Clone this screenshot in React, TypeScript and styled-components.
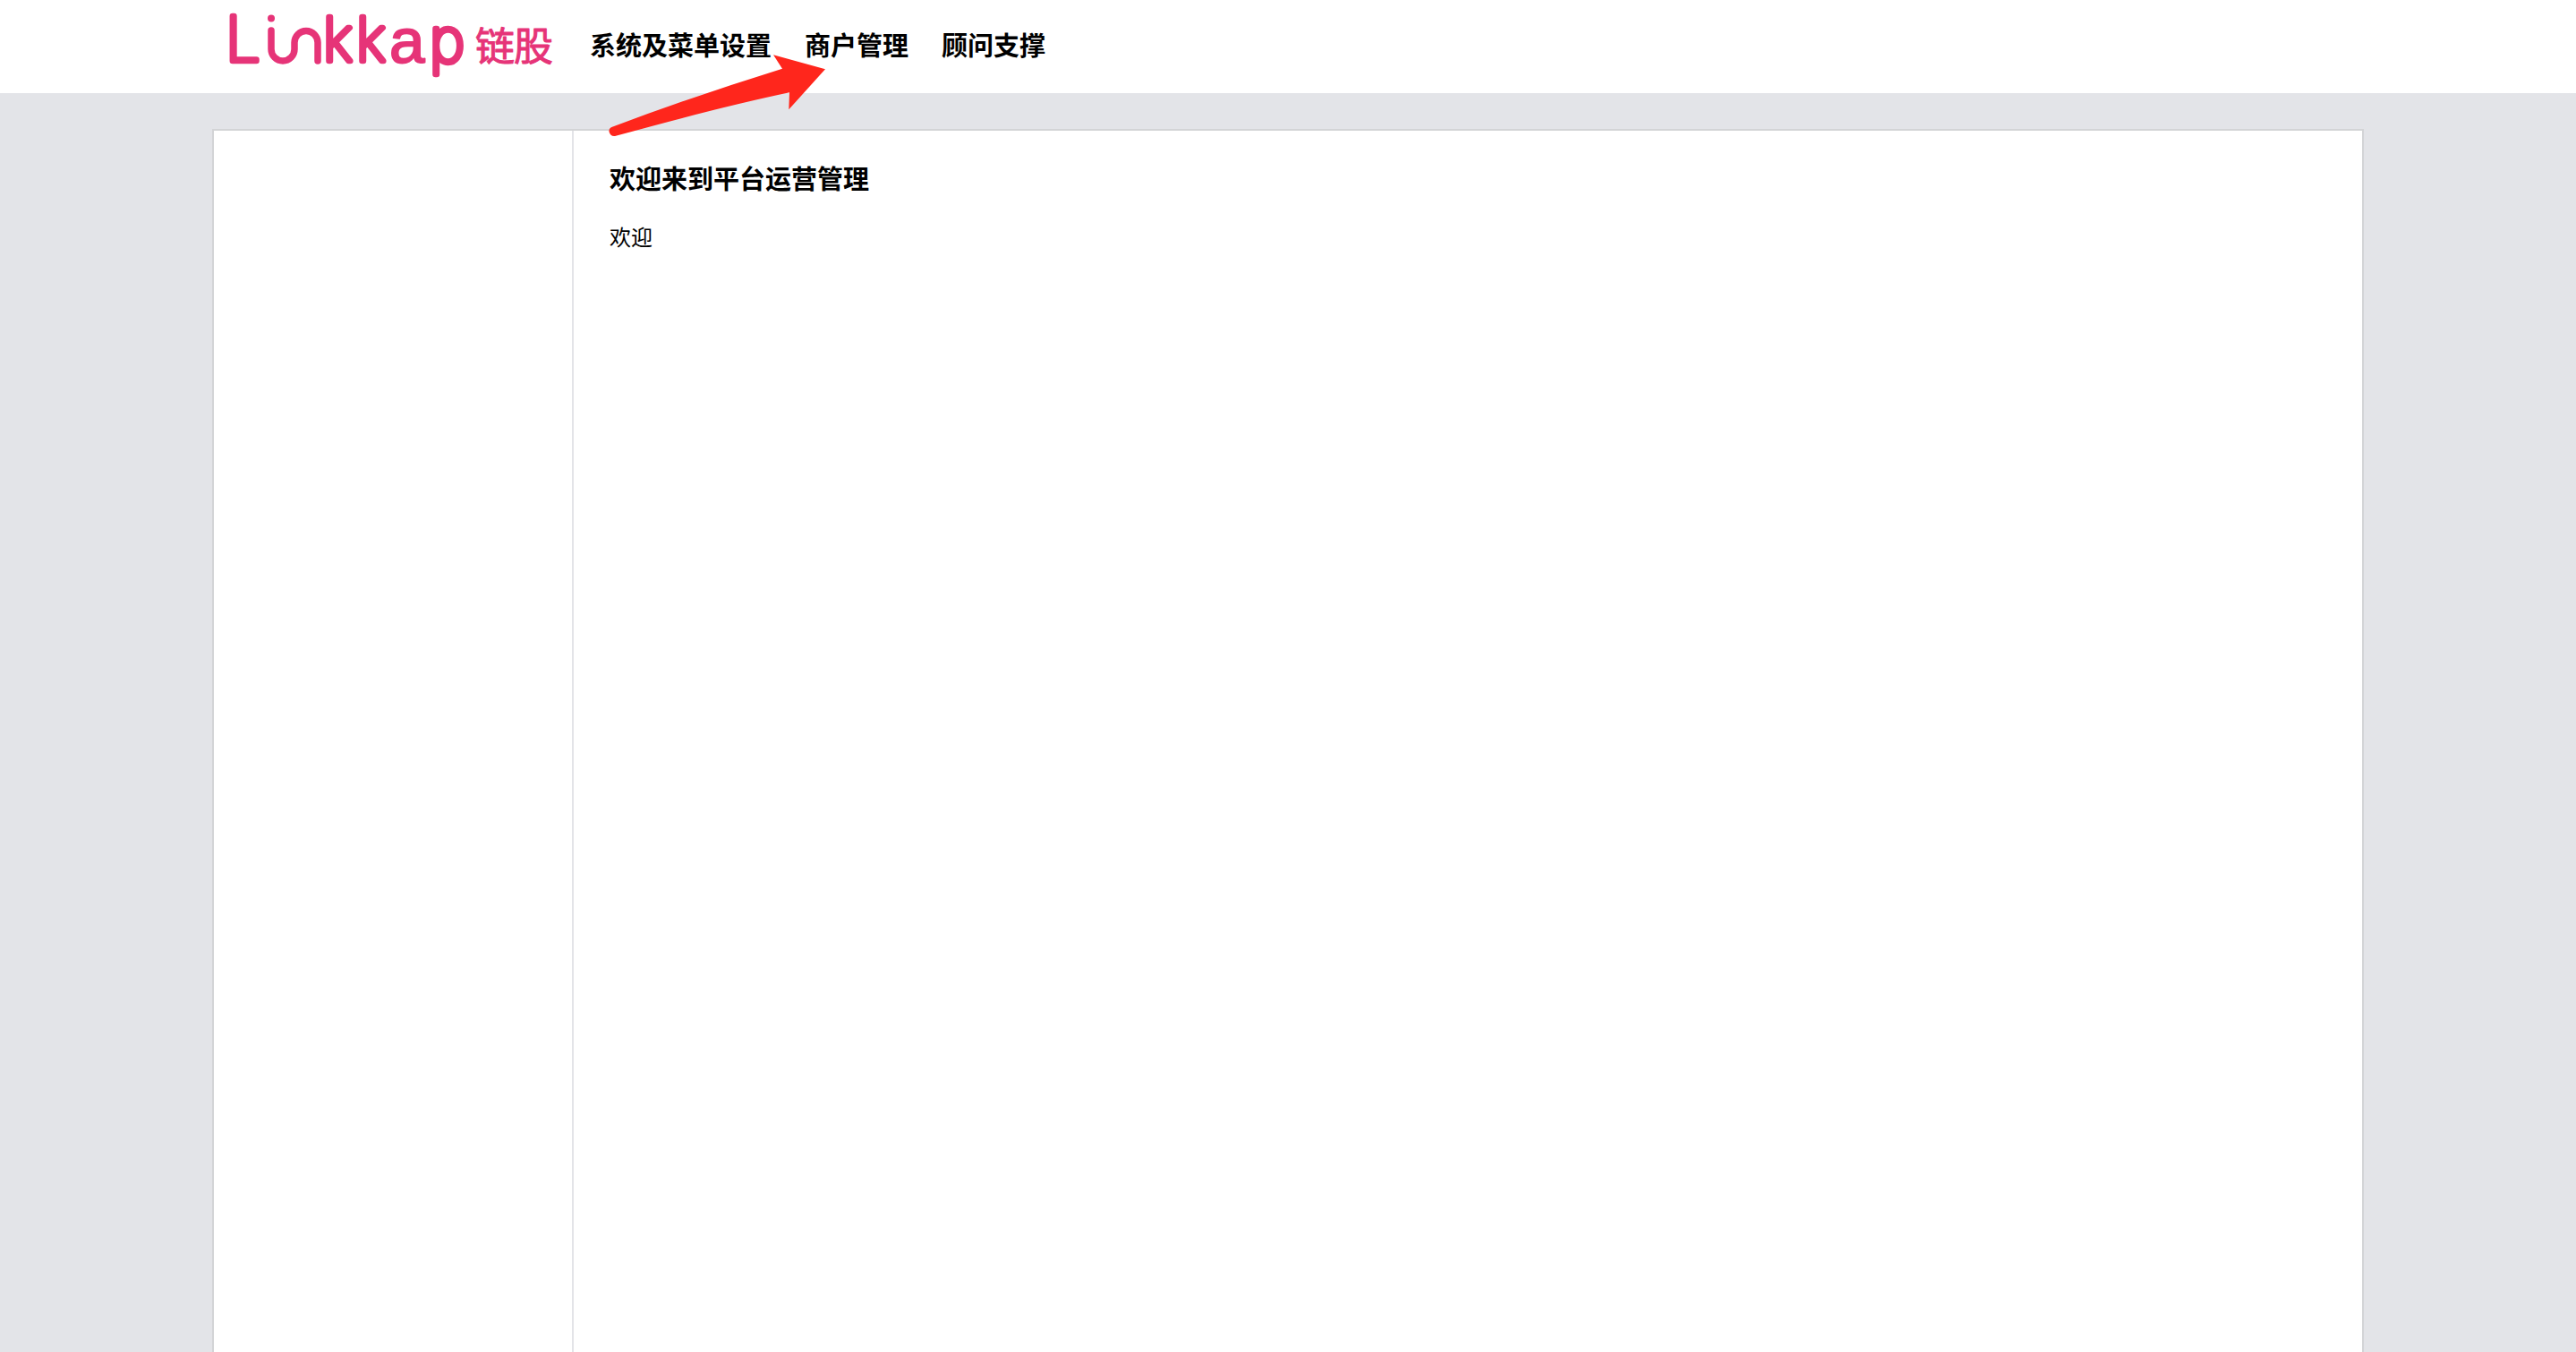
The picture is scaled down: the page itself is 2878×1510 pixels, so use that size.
import React from "react";
import styled, { createGlobalStyle } from "styled-components";

const GlobalStyle = createGlobalStyle`
  *, *::before, *::after { box-sizing: border-box; }
  body {
    margin: 0;
    background: #e3e4e8;
    color: #000;
    font-family: "Noto Sans CJK SC", sans-serif;
    font-size: 24px;
    line-height: 36px;
  }
`;

const Page = styled.div`
  display: flex;
  flex-direction: column;
  gap: 40px;
  min-height: 100vh;
`;

const Header = styled.header`
  background: #fff;
`;

const HeaderInner = styled.div`
  position: relative;
  display: flex;
  align-items: center;
  gap: 20px;
  width: 100%;
  max-width: 2404px;
  height: 104px;
  margin: 0 auto;
`;

const LogoLink = styled.a`
  display: flex;
  flex: none;
`;

const LogoSvg = styled.svg`
  display: block;
  width: 402px;
  height: 104px;
  fill: #e63478;
  stroke: #e63478;
  stroke-linecap: round;
  stroke-linejoin: round;
`;

const Nav = styled.nav`
  display: flex;
  gap: 37px;
  padding-bottom: 6px;
`;

const NavLink = styled.a`
  color: inherit;
  font-size: 29px;
  font-weight: 700;
  line-height: 40px;
  text-decoration: none;
  white-space: nowrap;
`;

const Pointer = styled.svg`
  position: absolute;
  top: 60px;
  left: 440px;
  width: 250px;
  height: 96px;
  fill: #ff261c;
  pointer-events: none;
`;

const Panel = styled.div`
  display: flex;
  flex: 1;
  width: 100%;
  max-width: 2404px;
  margin: 0 auto;
  border: 2px solid #d3d4d6;
  border-bottom: 0;
  background: #fff;
`;

const Sidebar = styled.aside`
  flex: none;
  width: 402px;
  border-right: 2px solid #e3e4e8;
`;

const Content = styled.main`
  flex: 1;
  padding: 32px 40px;
`;

const Title = styled.h1`
  margin: 0 0 28px;
  font-size: 29px;
  font-weight: 700;
  line-height: 40px;
`;

const Text = styled.p`
  margin: 0;
`;

const navItems = ["系统及菜单设置", "商户管理", "顾问支撑"];

function Logo() {
  return (
    <LogoSvg viewBox="237 0 402 104" role="img" aria-label="Linkkap 链股">
      <g fontFamily="Inter, sans-serif" fontWeight="100" fontSize="67" strokeWidth="6.500">
        <text x="252" y="68" fontSize="69">L</text>
        <text x="361 398" y="68">kk</text>
        <text x="480" y="69">p</text>
      </g>
      <text x="435" y="70" fontFamily="Liberation Sans, sans-serif" fontSize="71" strokeWidth="2">
        a
      </text>
      <circle cx="303" cy="20.5" r="4" stroke="none" />
      <path
        d="M303 34V55A13 13 0 0 0 329 55V47.500A13 13 0 0 1 355 47.500V68"
        fill="none"
        strokeWidth="7.500"
      />
      <text x="531 574" y="68" fontFamily="Noto Sans CJK SC, sans-serif" fontSize="44" strokeWidth="1">
        链股
      </text>
    </LogoSvg>
  );
}

export default function App() {
  return (
    <>
      <GlobalStyle />
      <Page>
        <Header>
          <HeaderInner>
            <LogoLink href="#">
              <Logo />
            </LogoLink>
            <Nav>
              {navItems.map((item) => (
                <NavLink key={item} href="#">
                  {item}
                </NavLink>
              ))}
            </Nav>
            <Pointer viewBox="677 60 250 96" overflow="visible" aria-hidden="true">
              <path d="M864 61.300L922 77.300L881.300 122.300L882 103.300Q804 119.700 688 151.800Q682 153 680.500 147Q680 143.300 684 141.700Q778 106.500 874 76.700Z" />
            </Pointer>
          </HeaderInner>
        </Header>
        <Panel>
          <Sidebar />
          <Content>
            <Title>欢迎来到平台运营管理</Title>
            <Text>欢迎</Text>
          </Content>
        </Panel>
      </Page>
    </>
  );
}
